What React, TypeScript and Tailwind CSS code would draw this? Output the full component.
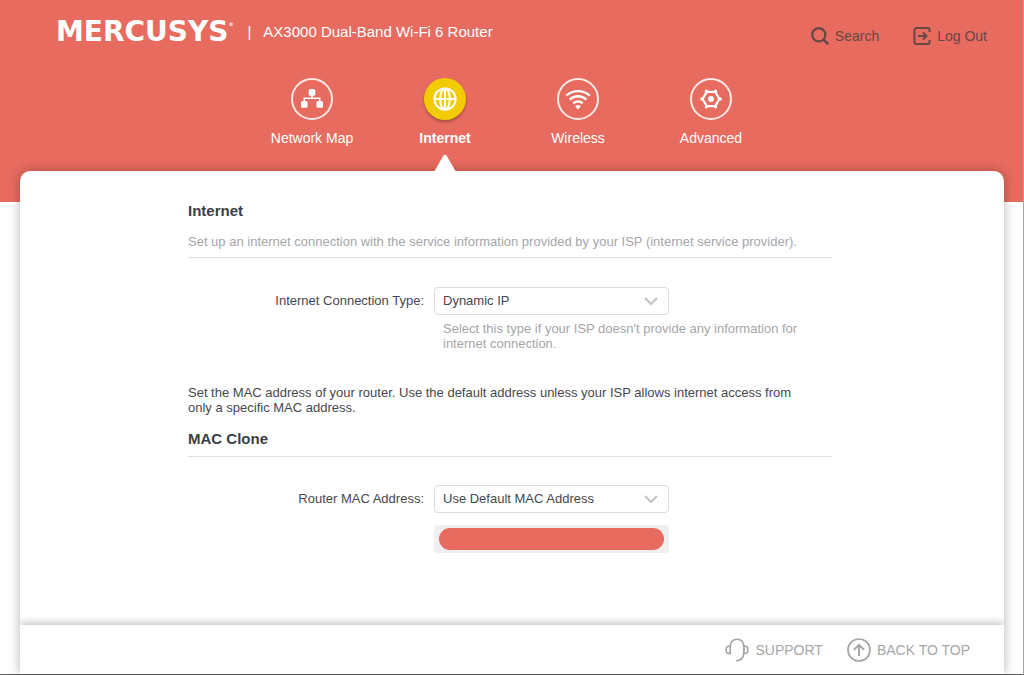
import type { ReactNode } from 'react'

const TABS = [
  { label: 'Network Map', icon: <NetworkIcon /> },
  { label: 'Internet', icon: <GlobeIcon />, active: true },
  { label: 'Wireless', icon: <WifiIcon /> },
  { label: 'Advanced', icon: <GearIcon /> },
]

function NetworkIcon() {
  return (
    <svg viewBox="0 0 22 22" className="size-[22px]" fill="currentColor">
      <rect x="7.700" y="1" width="6.600" height="6.800" rx="1.600" />
      <rect x="0" y="13" width="6.600" height="6.800" rx="1.600" />
      <rect x="15.400" y="13" width="6.600" height="6.800" rx="1.600" />
      <path d="M11 7v3.300M3.300 14v-3.700h15.400V14" fill="none" stroke="currentColor" strokeWidth="1.600" />
    </svg>
  )
}

function GlobeIcon() {
  return (
    <svg viewBox="0 0 24 24" className="size-6" fill="none" stroke="currentColor" strokeWidth="2">
      <circle cx="12" cy="12" r="10.600" />
      <ellipse cx="12" cy="12" rx="4.800" ry="10.600" />
      <path d="M12 1.400v21.200M1.400 12h21.200" />
    </svg>
  )
}

function WifiIcon() {
  return (
    <svg viewBox="0 0 26 24" className="h-6 w-[26px]" fill="none" stroke="currentColor" strokeWidth="2.400">
      <path d="M1.300 8.600a17.500 17.500 0 0 1 23.400 0M4.700 12.600a12 12 0 0 1 16.600 0M8.300 16.300a6.800 6.800 0 0 1 9.400 0" />
      <path d="M10.200 19.200a4.500 4.500 0 0 1 5.600 0L13 22.400z" fill="currentColor" stroke="none" />
    </svg>
  )
}

function GearIcon() {
  return (
    <svg viewBox="0 0 24 24" className="size-[22px]" fill="none" stroke="currentColor" strokeWidth="2.400">
      <path d="M7.400 4.200h9.200L21.200 12l-4.600 7.800H7.400L2.800 12z" strokeLinejoin="round" />
      <circle cx="12" cy="12" r="3.200" fill="currentColor" stroke="none" />
      <g fill="currentColor" stroke="none">
        <circle cx="7" cy="3.500" r="1.800" />
        <circle cx="17" cy="3.500" r="1.800" />
        <circle cx="22" cy="12" r="1.800" />
        <circle cx="17" cy="20.500" r="1.800" />
        <circle cx="7" cy="20.500" r="1.800" />
        <circle cx="2" cy="12" r="1.800" />
      </g>
    </svg>
  )
}

function SearchIcon() {
  return (
    <svg viewBox="0 0 18 18" className="size-[18px]" fill="none" stroke="currentColor" strokeWidth="2.200">
      <circle cx="7.800" cy="7.800" r="6.600" />
      <path d="M12.600 12.600l4.600 4.600" strokeWidth="2.600" />
    </svg>
  )
}

function LogoutIcon() {
  return (
    <svg viewBox="0 0 18 18" className="size-[18px]" fill="none" stroke="currentColor" strokeWidth="2">
      <path d="M16.600 5V3a2 2 0 0 0-2-2H3.400a2 2 0 0 0-2 2v12a2 2 0 0 0 2 2h11.200a2 2 0 0 0 2-2v-2" />
      <path d="M5 9h8M10 5.500L13.500 9 10 12.500" />
    </svg>
  )
}

function HeadsetIcon() {
  return (
    <svg viewBox="0 0 24 24" className="size-6" fill="none" stroke="currentColor" strokeWidth="1.600">
      <path d="M5.200 8.200v7.200H3.600a2.400 2.400 0 0 1-2.400-2.400v-2.400a2.400 2.400 0 0 1 2.400-2.400z" />
      <path d="M18.800 8.200h1.600a2.400 2.400 0 0 1 2.400 2.400V13a2.400 2.400 0 0 1-2.400 2.400h-1.600z" />
      <path d="M5.200 8.500C5.600 4 8.300 1.300 12 1.300s6.400 2.700 6.800 6.900v7.200c-.4 4.200-3 7.300-7.800 7.300" />
    </svg>
  )
}

function TopIcon() {
  return (
    <svg viewBox="0 0 24 24" className="size-6" fill="none" stroke="currentColor" strokeWidth="1.700">
      <circle cx="12" cy="12" r="11" />
      <path d="M12 18V7M7 11.800l5-5 5 5" strokeWidth="2" />
    </svg>
  )
}

function Select({ id, value }: { id: string; value: string }) {
  return (
    <div className="relative">
      <select
        id={id}
        className="block h-7 w-full appearance-none rounded border border-[#dcdcdc] bg-white pr-8 pl-2 text-[#45484d]"
      >
        <option>{value}</option>
      </select>
      <svg
        viewBox="0 0 14 9"
        className="pointer-events-none absolute top-2.5 right-[11px] h-[9px] w-3.5"
        fill="none"
        stroke="#c4c4c4"
        strokeWidth="2.200"
      >
        <path d="M1 1l6 6 6-6" />
      </svg>
    </div>
  )
}

function SectionTitle({ children }: { children: ReactNode }) {
  return <h2 className="text-[15px] leading-5 font-bold text-[#3c4046]">{children}</h2>
}

export default function App() {
  return (
    <div className="flex min-h-screen flex-col border-r border-b border-r-[#a8a29e] border-b-[#5c5c5c] bg-white font-['Liberation_Sans',Arial,sans-serif] text-sm text-[#45484d]">
      <header className="bg-[#e86b5f] pb-[31px]">
        <div className="flex h-[78px] items-start justify-between pr-9 pl-14">
          <div className="flex items-center pt-4 text-[15px] leading-8 text-white">
            <a href="#" className="flex items-start font-['DejaVu_Sans',sans-serif] text-[28px] font-bold">
              MERCUSYS<span className="text-[5px] leading-4">®</span>
            </a>
            <span className="ml-3.5">|</span>
            <h1 className="ml-3">AX3000 Dual-Band Wi-Fi 6 Router</h1>
          </div>
          <div className="flex gap-[34px] pt-[26px] leading-5 text-[#654746]">
            <button className="flex items-center gap-1.5">
              <SearchIcon />
              Search
            </button>
            <button className="flex items-center gap-1.5">
              <LogoutIcon />
              Log Out
            </button>
          </div>
        </div>

        <nav className="mx-auto grid max-w-[532px] grid-cols-4 text-white">
          {TABS.map((tab) => (
            <a
              key={tab.label}
              href="#"
              className={
                tab.active
                  ? 'relative flex h-[93px] flex-col items-center font-bold'
                  : 'flex h-[93px] flex-col items-center'
              }
            >
              <span
                className={
                  tab.active
                    ? 'flex size-[42px] items-center justify-center rounded-full bg-[#f2cb05] shadow-[0_2px_3px_rgba(0,0,0,0.3)]'
                    : 'flex size-[42px] items-center justify-center rounded-full border-2 border-[#fde9e6]'
                }
              >
                {tab.icon}
              </span>
              <span className="mt-2 leading-5">{tab.label}</span>
              {tab.active && (
                <svg viewBox="0 0 22 18" className="absolute -bottom-px z-10 h-[18px] w-[22px]">
                  <path d="M0 18L9.500 1.500Q11 0 12.500 1.500L22 18z" fill="#fff" />
                </svg>
              )}
            </a>
          ))}
        </nav>
      </header>

      <div className="mr-[19px] -mt-[31px] ml-5 flex flex-1 flex-col rounded-t-[10px] bg-white shadow-[0_0_12px_rgba(0,0,0,0.3)]">
        <div className="flex-1 pr-1">
          <main className="mx-auto w-full max-w-[644px] pt-[30px] pb-10 text-[13px]">
            <SectionTitle>Internet</SectionTitle>
            <p className="mt-3 border-b border-[#dedede] pb-1.5 leading-[18px] text-[#a5a6a8]">
              Set up an internet connection with the service information provided by your ISP (internet service
              provider).
            </p>

            <div className="mt-[29px] grid grid-cols-[236px_235px_1fr] gap-x-2.5">
              <label htmlFor="connection" className="text-right leading-7">
                Internet Connection Type:
              </label>
              <Select id="connection" value="Dynamic IP" />
              <p className="col-span-2 col-start-2 mt-1.5 pl-[9px] leading-[15px] text-[#a5a6a8]">
                Select this type if your ISP doesn't provide any information for internet connection.
              </p>
            </div>

            <p className="mt-[34px] pr-5 leading-[15px]">
              Set the MAC address of your router. Use the default address unless your ISP allows internet access from
              only a specific MAC address.
            </p>
            <div className="mt-3.5 border-b border-[#dedede] pb-[7px]">
              <SectionTitle>MAC Clone</SectionTitle>
            </div>

            <div className="mt-7 grid grid-cols-[236px_235px] gap-x-2.5">
              <label htmlFor="mac" className="text-right leading-7">
                Router MAC Address:
              </label>
              <Select id="mac" value="Use Default MAC Address" />
              <div className="col-start-2 mt-3 rounded bg-[#efefef] px-[5px] py-[3px]">
                <div className="h-[22px] rounded-full bg-[#e86b5f]" />
              </div>
            </div>
          </main>
        </div>

        <footer className="flex h-[49px] items-center justify-end gap-6 pr-[34px] text-[#a5a6a8] shadow-[0_-2px_8px_rgba(0,0,0,0.25)] [clip-path:inset(-12px_0_0_0)]">
          <a href="#" className="flex items-center gap-1.5">
            <HeadsetIcon />
            SUPPORT
          </a>
          <a href="#" className="flex items-center gap-1.5">
            <TopIcon />
            BACK TO TOP
          </a>
        </footer>
      </div>
    </div>
  )
}
